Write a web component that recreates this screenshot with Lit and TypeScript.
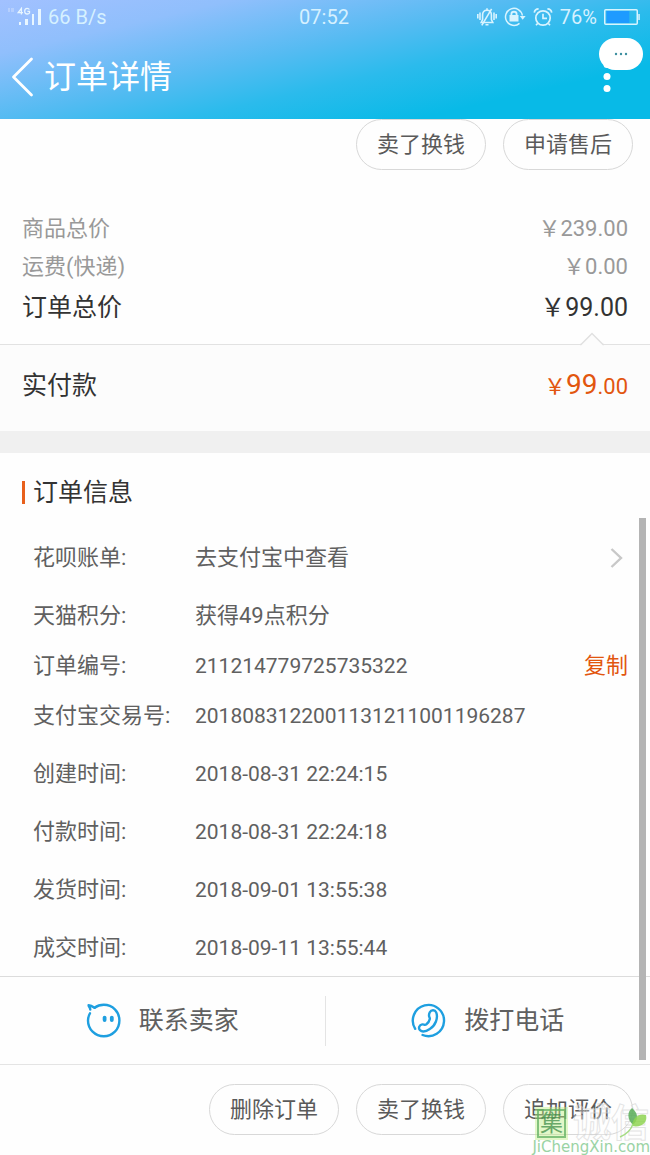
import { LitElement, html, css, svg } from "lit";
import { customElement, property, state } from "lit/decorators.js";

interface InfoRow {
  label: string;
  value: string;
  kind?: "link" | "copy" | "text";
}

const INFO_GROUPS: InfoRow[][] = [
  [{ label: "花呗账单:", value: "去支付宝中查看", kind: "link" }],
  [
    { label: "天猫积分:", value: "获得49点积分", kind: "text" },
    { label: "订单编号:", value: "211214779725735322", kind: "copy" },
    { label: "支付宝交易号:", value: "2018083122001131211001196287" },
  ],
  [{ label: "创建时间:", value: "2018-08-31 22:24:15" }],
  [{ label: "付款时间:", value: "2018-08-31 22:24:18" }],
  [{ label: "发货时间:", value: "2018-09-01 13:55:38" }],
  [{ label: "成交时间:", value: "2018-09-11 13:55:44" }],
];

@customElement("status-bar")
export class StatusBar extends LitElement {
  @property() time = "07:52";
  @property() speed = "66 B/s";
  @property({ type: Number }) battery = 76;

  static styles = css`
    :host {
      display: grid;
      grid-template-columns: 1fr auto 1fr;
      align-items: center;
      height: 34px;
      padding: 0 10px 0 8px;
      font-size: 20px;
      color: #d6f1ff;
    }
    .side {
      display: flex;
      align-items: center;
      gap: 7px;
    }
    .end {
      justify-content: flex-end;
    }
    svg {
      display: block;
      flex: none;
    }
  `;

  render() {
    return html`
      <div class="side">
        <svg width="33" height="20" viewBox="0 0 33 20" aria-hidden="true">
          <g fill="#fff" opacity="0.25"><rect x="0" y="1" width="2" height="4" /><rect x="3" y="1" width="3" height="4" /></g>
          <g fill="none" stroke="#e8f6ff" stroke-width="1.3">
            <path d="M13.4 7.4V1.4L10.2 5.6H15" />
            <path d="M21.4 2.5C20.8 1.5 20 1.3 19.2 1.3C17.6 1.3 16.7 2.5 16.7 4.2C16.7 5.9 17.6 7 19.2 7C20.4 7 21.2 6.5 21.5 6V4.4H19.4" />
          </g>
          <g fill="#e8f6ff">
            <rect x="11" y="15" width="2" height="3" />
            <rect x="17" y="12" width="3" height="6" />
            <rect x="24" y="7" width="2" height="11" />
            <rect x="30" y="2" width="3" height="16" />
          </g>
        </svg>
        <span>${this.speed}</span>
      </div>
      <span>${this.time}</span>
      <div class="side end">
        <svg width="20" height="20" viewBox="0 0 20 20" fill="none" stroke="#d8f4ff" stroke-width="1.6" aria-hidden="true">
          <path d="M4.2 15.5H15.8L14.4 12.5V8C14.4 5 12.6 3.2 10 3.2C7.4 3.2 5.6 5 5.6 8V12.5Z" />
          <path d="M10 1.2V3M8.5 17.8H11.5M14.6 1.8L4.8 18.4" />
          <path d="M3 5.5V13M0.8 7V11.5M17 5.5V13M19.2 7V11.5" />
        </svg>
        <svg width="22" height="20" viewBox="0 0 22 20" fill="none" stroke="#d8f4ff" stroke-width="1.5" aria-hidden="true">
          <path d="M15.5 16.4A8.5 8.5 0 1 1 18.4 8.5" />
          <path d="M15.8 9H21.6L18.7 12.8Z" fill="#d8f4ff" stroke="none" />
          <rect x="5.5" y="8" width="9" height="6.5" fill="#d8f4ff" stroke="none" />
          <path d="M7.4 9V7C7.4 4 12.6 4 12.6 7V9" stroke-width="1.8" />
        </svg>
        <svg width="20" height="20" viewBox="0 0 20 20" fill="none" stroke="#d8f4ff" stroke-width="1.7" aria-hidden="true">
          <circle cx="10" cy="11" r="7.2" />
          <path d="M10 6.8V11.4H14M1.3 5.6C1.6 3.4 3.4 2 5.6 1.9M18.7 5.6C18.4 3.4 16.6 2 14.4 1.9M4.6 16.5L3 18.3M15.4 16.5L17 18.3" />
        </svg>
        <span>${this.battery}%</span>
        <svg width="36" height="18" viewBox="0 0 36 18" aria-hidden="true">
          <rect x="0.75" y="1.75" width="32.5" height="14.5" rx="1" fill="none" stroke="#d8f4ff" stroke-width="1.5" />
          <rect x="2.5" y="3" width=${(this.battery * 30) / 100} height="12" fill="#1e9bff" />
          <rect x="34.3" y="6" width="1.5" height="6" fill="#d8f4ff" />
        </svg>
      </div>
    `;
  }
}

@customElement("pill-actions")
export class PillActions extends LitElement {
  @property({ type: Array }) items: string[] = [];

  static styles = css`
    :host {
      display: flex;
      justify-content: flex-end;
      gap: 17px;
      padding: 0 17px;
    }
    .pill {
      box-sizing: border-box;
      width: 130px;
      height: 51px;
      padding: 0;
      border: 1px solid #d8d8d8;
      border-radius: 26px;
      background: transparent;
      color: #5a5a5a;
      font: inherit;
      font-size: 22px;
      line-height: 32px;
    }
  `;

  render() {
    return this.items.map((t) => html`<button class="pill" type="button">${t}</button>`);
  }
}

@customElement("site-mark")
export class SiteMark extends LitElement {
  static styles = css`
    :host {
      display: flex;
      flex-direction: column;
      align-items: flex-end;
      pointer-events: none;
    }
    .name {
      display: flex;
      align-items: center;
      gap: 7px;
      height: 32px;
      padding-right: 1px;
    }
    .seal {
      display: grid;
      place-items: center;
      box-sizing: border-box;
      width: 29px;
      height: 29px;
      border: 2px solid #6db866;
      outline: 2px solid rgba(190, 238, 128, 0.5);
      background: rgba(190, 238, 128, 0.5);
      color: #4f9a50;
      font-size: 23px;
      line-height: 25px;
      opacity: 0.85;
    }
    .outline {
      position: relative;
      font-size: 38px;
      line-height: 32px;
      font-weight: 700;
      color: rgba(255, 255, 255, 0.3);
      -webkit-text-stroke: 1px rgba(205, 205, 205, 0.55);
    }
    .leaf {
      position: absolute;
      right: 1px;
      top: 0;
    }
    .url {
      font-family: "DejaVu Sans", sans-serif;
      font-size: 15px;
      line-height: 16px;
      color: #9ad3a4;
    }
  `;

  render() {
    return html`
      <div class="name">
        <span class="seal">集</span>
        <span class="outline">诚信<svg class="leaf" width="30" height="34" viewBox="0 0 30 34" aria-hidden="true">
            <path d="M15 18C9 12 9 5 14 1C20 6 21 12 15 18Z" fill="#58ad57" opacity="0.85" />
            <path d="M14 19C15 10 21 6 28 8C30 16 23 21 14 19Z" fill="#8fd552" opacity="0.85" />
            <path d="M15 17C13 23 9 27 2 30" fill="none" stroke="#a6dc84" stroke-width="1.4" />
          </svg></span>
      </div>
      <span class="url">JiChengXin.com</span>
    `;
  }
}

@customElement("app-root")
export class AppRoot extends LitElement {
  @state() private copied = false;

  static styles = css`
    :host {
      display: block;
      position: relative;
      overflow: hidden;
      background: #fefefe;
      color: #606060;
      font-family: Roboto, "Noto Sans CJK SC", sans-serif;
      font-size: 22px;
      line-height: 32px;
    }
    button {
      padding: 0;
      border: 0;
      background: none;
      color: inherit;
      font: inherit;
    }
    a {
      color: inherit;
      text-decoration: none;
    }
    svg {
      display: block;
      flex: none;
    }
    h1,
    h2,
    dl,
    dd {
      margin: 0;
      font-weight: 400;
    }
    .top {
      position: relative;
      background: linear-gradient(167deg, #a2c1ff 0%, #90bffc 20%, #55bbf2 44%, #2bbbec 60%, #08bae7 80%);
      color: #fff;
    }
    .nav {
      display: flex;
      align-items: center;
      gap: 10px;
      height: 85px;
      padding: 0 36px 0 11px;
    }
    .nav h1 {
      flex: 1;
      font-size: 32px;
      line-height: 48px;
    }
    .bubble {
      position: absolute;
      top: 38px;
      right: 7px;
      display: grid;
      place-items: center;
      width: 44px;
      height: 32px;
      border-radius: 16px;
      background: #fff;
    }
    .prices {
      padding: 40px 22px 14px;
    }
    .line {
      display: flex;
      justify-content: space-between;
      align-items: center;
      height: 38px;
      color: #999;
    }
    .total {
      height: 44px;
      font-size: 25px;
      color: #333;
    }
    .paid {
      position: relative;
      display: flex;
      justify-content: space-between;
      align-items: center;
      height: 81px;
      padding: 0 22px 5px;
      border-top: 1px solid #e2e2e2;
      border-bottom: 22px solid #f0f0f0;
      background: #fcfcfc;
      font-size: 25px;
      color: #333;
    }
    .notch {
      position: absolute;
      top: -13px;
      right: 46px;
    }
    .amount {
      font-size: 22px;
      color: #e2560f;
    }
    .amount b {
      font-size: 28px;
      font-weight: 400;
    }
    .section {
      display: flex;
      align-items: center;
      gap: 8px;
      height: 79px;
      padding: 0 22px;
      font-size: 25px;
      color: #333;
    }
    .section::before {
      content: "";
      width: 3px;
      height: 23px;
      background: #e8601c;
    }
    .info {
      display: flex;
      flex-direction: column;
      gap: 8px;
      padding: 1px 22px 3px 33px;
    }
    .row {
      display: grid;
      grid-template-columns: 162px 1fr auto;
      align-items: center;
      height: 50px;
    }
    .num {
      font-size: 21px;
    }
    .chevron {
      padding-right: 5px;
    }
    .copy {
      color: #e2560f;
    }
    .contact {
      display: grid;
      grid-template-columns: 1fr 1px 1fr;
      align-items: center;
      height: 87px;
      border-top: 1px solid #dcdcdc;
      border-bottom: 1px solid #e4e4e4;
      font-size: 25px;
    }
    .contact button {
      display: flex;
      align-items: center;
      justify-content: center;
      gap: 18px;
    }
    .rule {
      height: 50px;
      background: #e4e4e4;
    }
    .bottom {
      padding-top: 19px;
      padding-bottom: 20px;
    }
    .thumb {
      position: absolute;
      top: 518px;
      right: 4px;
      bottom: 95px;
      width: 7px;
      background: #b4b4b4;
    }
    .mark {
      position: absolute;
      right: 0;
      bottom: 0;
    }
  `;

  private row(r: InfoRow) {
    return html`
      <div class="row">
        <dt>${r.label}</dt>
        <dd class=${r.kind === "link" || r.kind === "text" ? "" : "num"}>
          ${r.kind === "link" ? html`<a href="#bill">${r.value}</a>` : r.value}
        </dd>
        ${r.kind === "link"
          ? html`<dd class="chevron">
              <svg width="13" height="20" viewBox="0 0 13 20" fill="none" stroke="#c8c8c8" stroke-width="2.4" aria-hidden="true">
                <path d="M1.5 1L11 10L1.5 19" />
              </svg>
            </dd>`
          : ""}
        ${r.kind === "copy"
          ? html`<dd><button class="copy" type="button" @click=${() => (this.copied = true)}>复制</button></dd>`
          : ""}
      </div>
    `;
  }

  render() {
    return html`
      <header class="top">
        <status-bar></status-bar>
        <div class="nav">
          <button type="button" aria-label="返回">
            <svg width="23" height="40" viewBox="0 0 23 40" fill="none" stroke="#fff" stroke-width="2.8" stroke-linecap="round" stroke-linejoin="round">
              <path d="M20.5 2L2.5 20L20.5 38" />
            </svg>
          </button>
          <h1>订单详情</h1>
          <button type="button" aria-label="更多">
            <svg width="14" height="32" viewBox="0 0 14 32" fill="#fff">
              ${[3.5, 15.5, 27.5].map((y) => svg`<circle cx="7" cy=${y} r="3.5" />`)}
            </svg>
          </button>
        </div>
        <button class="bubble" type="button" aria-label="菜单">
          <svg width="14" height="4" viewBox="0 0 14 4" fill="#3c8f9f">
            <circle cx="2" cy="2" r="1.2" /><circle cx="7" cy="2" r="1.2" /><circle cx="12" cy="2" r="1.2" />
          </svg>
        </button>
      </header>
      <main>
        <pill-actions .items=${["卖了换钱", "申请售后"]}></pill-actions>
        <section class="prices">
          <div class="line"><span>商品总价</span><span>￥239.00</span></div>
          <div class="line"><span>运费(快递)</span><span>￥0.00</span></div>
          <div class="line total"><span>订单总价</span><span>￥99.00</span></div>
        </section>
        <section class="paid">
          <svg class="notch" width="24" height="14" viewBox="0 0 24 14" aria-hidden="true">
            <path d="M0 14V12.5H1L12 1.5L23 12.5H24V14Z" fill="#fcfcfc" />
            <path d="M0 12.5H1L12 1.5L23 12.5H24" fill="none" stroke="#e0e0e0" stroke-width="1.4" />
          </svg>
          <span>实付款</span>
          <span class="amount">￥<b>99</b>.00</span>
        </section>
        <h2 class="section">订单信息</h2>
        <dl class="info">
          ${INFO_GROUPS.map((g) => html`<div>${g.map((r) => this.row(r))}</div>`)}
        </dl>
      </main>
      <footer>
        <div class="contact">
          <button type="button">
            <svg width="35" height="35" viewBox="0 0 35 35" fill="none" stroke="#1e9fe0" stroke-width="2.4" stroke-linecap="round" stroke-linejoin="round" aria-hidden="true">
              <path d="M8.6 4.8C11.2 2.8 14.4 1.8 17.8 1.8C26.6 1.8 33.4 8.6 33.4 17.4C33.4 26.2 26.6 33.2 17.8 33.2C9 33.2 2 26.2 2 17.4C2 14.8 2.8 12.4 4 10.2" />
              <path d="M8.6 4.8C6.8 3.6 4.8 2.4 2.6 2.2C2.6 3.8 4.2 4.6 4.3 6.6" />
              <path d="M18.6 14.6V17M25.8 14.6V17" stroke-width="3.8" />
            </svg>
            联系卖家
          </button>
          <span class="rule"></span>
          <button type="button">
            <svg width="35" height="35" viewBox="0 0 35 35" fill="none" stroke="#1e9fe0" stroke-width="2.4" stroke-linecap="round" stroke-linejoin="round" aria-hidden="true">
              <path d="M4.2 25.8A15.6 15.6 0 1 1 11.6 32" />
              <path d="M18.8 9.2C20.2 6.6 24 6.6 25.2 9.4C27.4 14.8 24.4 22.6 18.8 26C15.6 28.2 11.4 29.6 9 27.2C7 25 8.4 21.8 11.2 21.4C13 21.2 13.8 22.6 15.2 21.4C17 20.2 18.4 18 18.8 16C19.2 14 16.6 13.4 18.8 9.2Z" />
            </svg>
            拨打电话
          </button>
        </div>
        <pill-actions class="bottom" .items=${["删除订单", "卖了换钱", "追加评价"]}></pill-actions>
      </footer>
      <div class="thumb"></div>
      <site-mark class="mark"></site-mark>
    `;
  }
}
